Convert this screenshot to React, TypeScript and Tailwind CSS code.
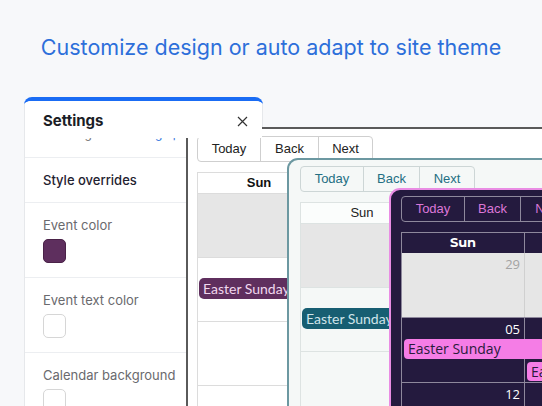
import React from "react";

type Theme = {
  frame: string;
  btnGroup: string;
  btn: string;
  btnSep: string;
  table: string;
  head: string;
  headCell: string;
  row: string;
  cell: string;
  offCell: string;
  dateOn: string;
  dateOff: string;
  event: string;
  event2: string;
  widths: [string, string, string];
};

const weeks: { off: boolean[]; dates: string[] }[] = [
  { off: [true, true, true], dates: ["29", "30", "31"] },
  { off: [false, false, false], dates: ["05", "06", "07"] },
  { off: [false, false, false], dates: ["12", "13", "14"] },
  { off: [false, false, false], dates: ["19", "20", "21"] },
];

function Calendar({ t }: { t: Theme }) {
  return (
    <div className={t.frame}>
      <div className={t.btnGroup}>
        <div className={`${t.widths[0]} ${t.btn}`}>Today</div>
        <div className={`${t.widths[1]} ${t.btn} ${t.btnSep}`}>Back</div>
        <div className={`${t.widths[2]} ${t.btn} ${t.btnSep}`}>Next</div>
      </div>
      <div className={t.table}>
        <div className={t.head}>
          <div className={t.headCell}>Sun</div>
          <div className={t.headCell}>Mon</div>
          <div className={t.headCell}>Tue</div>
        </div>
        {weeks.map((w, i) => (
          <div key={i} className={t.row}>
            <div className="absolute inset-0 grid grid-cols-[123px_123px_123px]">
              {w.off.map((o, j) => (
                <div key={j} className={o ? t.offCell : t.cell} />
              ))}
            </div>
            <div className="relative grid grid-cols-[123px_123px_123px]">
              {w.dates.map((d, j) => (
                <div key={j} className={`${w.off[j] ? t.dateOff : t.dateOn}`}>
                  {d}
                </div>
              ))}
            </div>
            {i === 1 && (
              <div className="relative flex flex-col">
                <div className={t.event}>Easter Sunday</div>
                <div className={t.event2}>Easter Monday</div>
              </div>
            )}
          </div>
        ))}
      </div>
    </div>
  );
}

const cal1: Theme = {
  frame:
    "absolute left-[186px] top-[127px] w-[420px] h-[300px] rounded-tl-[11px] border-2 border-[#5a5a5a] bg-white pl-[9px] pt-[7px]",
  btnGroup:
    "flex h-[26px] w-fit rounded-[4px] border border-[#cfcfcf] text-[13px] text-[#222] [font-family:'Liberation_Sans',Arial,sans-serif]",
  btn: "flex items-center justify-center",
  btnSep: "border-l border-[#cfcfcf]",
  widths: ["w-[62px]", "w-[58px]", "w-[54px]"],
  table: "mt-[10px] border-l border-t border-[#dcdcdc]",
  head: "grid grid-cols-[123px_123px_123px] h-[21px] bg-white",
  headCell:
    "flex items-center justify-center border-r border-b border-[#dcdcdc] text-[13px] font-bold text-[#111] [font-family:'Liberation_Sans',Arial,sans-serif]",
  row: "relative h-[64px] border-b border-[#dcdcdc]",
  cell: "border-r border-[#dcdcdc] bg-white",
  offCell: "border-r border-[#dcdcdc] bg-[#e6e6e6]",
  dateOn: "h-[20px] pr-[6px] text-right text-[12px] leading-[20px] text-[#333]",
  dateOff: "h-[20px] pr-[6px] text-right text-[12px] leading-[20px] text-[#999]",
  event:
    "ml-[1px] w-[244px] h-[21px] rounded-[5px] bg-[#5f2f5e] px-[4px] text-[14px] leading-[21px] text-[#f1d8ef] [font-family:Lato,sans-serif]",
  event2:
    "ml-[125px] mt-[2px] w-[120px] h-[20px] rounded-[5px] bg-[#5f2f5e] px-[4px] text-[14px] leading-[20px] text-[#f1d8ef] [font-family:Lato,sans-serif]",
};

const cal2: Theme = {
  frame:
    "absolute left-[287px] top-[158px] w-[380px] h-[270px] rounded-tl-[11px] border-2 border-[#6c98a1] bg-[#f5f8f7] pl-[11px] pt-[6px]",
  btnGroup:
    "flex h-[26px] w-fit rounded-[4px] border border-[#cdd6d6] text-[13px] text-[#236f83] [font-family:'Liberation_Sans',Arial,sans-serif]",
  btn: "flex items-center justify-center",
  btnSep: "border-l border-[#cdd6d6]",
  widths: ["w-[62px]", "w-[56px]", "w-[55px]"],
  table: "mt-[10px] border-l border-t border-[#dde3e2]",
  head: "grid grid-cols-[123px_123px_123px] h-[21px] bg-[#fbfdfc]",
  headCell:
    "flex items-center justify-center border-r border-b border-[#dde3e2] text-[13px] text-[#222] [font-family:'Liberation_Sans',Arial,sans-serif]",
  row: "relative h-[64px] border-b border-[#dde3e2]",
  cell: "border-r border-[#dde3e2] bg-[#f5f8f7]",
  offCell: "border-r border-[#dde3e2] bg-[#e6e6e6]",
  dateOn: "h-[20px] pr-[6px] text-right text-[12px] leading-[20px] text-[#333]",
  dateOff: "h-[20px] pr-[6px] text-right text-[12px] leading-[20px] text-[#999]",
  event:
    "ml-[1px] w-[244px] h-[21px] rounded-[5px] bg-[#175e72] px-[4px] text-[14px] leading-[21px] text-[#cfe4ea] [font-family:Lato,sans-serif]",
  event2:
    "ml-[125px] mt-[2px] w-[120px] h-[20px] rounded-[5px] bg-[#175e72] px-[4px] text-[14px] leading-[20px] text-[#cfe4ea] [font-family:Lato,sans-serif]",
};

const cal3: Theme = {
  frame:
    "absolute left-[389px] top-[188px] w-[300px] h-[240px] rounded-tl-[11px] border-2 border-[#e98de4] bg-[#241a3e] pl-[10px] pt-[6px]",
  btnGroup:
    "flex h-[26px] w-fit rounded-[4px] border border-[#8e889c] text-[13px] text-[#dc77d8] [font-family:'Liberation_Sans',Arial,sans-serif]",
  btn: "flex items-center justify-center",
  btnSep: "border-l border-[#8e889c]",
  widths: ["w-[62px]", "w-[56px]", "w-[56px]"],
  table: "mt-[10px] border-l border-t border-[#8e889c]",
  head: "grid grid-cols-[123px_123px_123px] h-[20px] bg-[#241a3e]",
  headCell:
    "flex items-center justify-center border-r border-[#8e889c] text-[13px] font-bold text-white [font-family:Montserrat,'Open_Sans',sans-serif]",
  row: "relative h-[65px] border-b border-[#8e889c]",
  cell: "border-r border-[#8e889c] bg-[#241a3e]",
  offCell: "border-r border-[#d0d0d0] bg-[#e6e6e6]",
  dateOn:
    "h-[21px] pt-[2px] pr-[5px] text-right text-[13px] leading-[19px] text-white [font-family:'Open_Sans',sans-serif]",
  dateOff:
    "h-[21px] pt-[2px] pr-[5px] text-right text-[13px] leading-[19px] text-[#a3a3a3] [font-family:'Open_Sans',sans-serif]",
  event:
    "ml-[2px] w-[244px] h-[20px] rounded-[4px] bg-[#f57de6] px-[4px] text-[14px] leading-[20px] text-[#2a1b3c] [font-family:'Open_Sans',sans-serif]",
  event2:
    "ml-[125px] mt-[3px] w-[120px] h-[19px] rounded-[4px] bg-[#f57de6] px-[4px] text-[14px] leading-[19px] text-[#2a1b3c] [font-family:'Open_Sans',sans-serif]",
};

function Swatch({ filled }: { filled?: boolean }) {
  return filled ? (
    <div className="mt-[5px] h-[24px] w-[23px] rounded-[5px] border border-[#4a2248] bg-[#5e2f5e]" />
  ) : (
    <div className="mt-[5px] h-[24px] w-[23px] rounded-[5px] border border-[#d6d6d6] bg-white" />
  );
}

function SettingsPanel() {
  return (
    <div className="absolute left-[24px] top-[97px] h-[330px] w-[239px] overflow-hidden rounded-t-[8px] border-t-4 border-[#1a6cf4] bg-white [font-family:Inter,'Noto_Sans',sans-serif]">
      <div className="h-full border-x border-[#e6e8eb]">
        <div className="relative z-10 flex h-[37px] items-center justify-between bg-white pl-[18px] pr-[14px] pt-[4px]">
          <span className="text-[15px] font-bold text-[#1b1d26]">Settings</span>
          <svg width="11" height="11" viewBox="0 0 11 11" className="text-[#333]">
            <path d="M1 1L10 10M10 1L1 10" stroke="currentColor" strokeWidth="1.2" />
          </svg>
        </div>
        <div className="h-[20px] overflow-hidden border-b border-[#eceef1]">
          <div className="-mt-[12px] whitespace-nowrap pl-[18px] text-[12px] leading-[16px]">
            <span className="text-[#777]">Showing in live </span>
            <span className="text-[#3b7be0]">design preview mode</span>
          </div>
        </div>
        <div className="flex h-[45px] items-center border-b border-[#eceef1] pl-[18px] pt-[2px] text-[13px] font-medium text-[#1f2230]">
          Style overrides
        </div>
        <div className="h-[75px] border-b border-[#eceef1] pl-[18px] pt-[13px]">
          <div className="text-[13px] leading-[18px] text-[#6a6a6e]">Event color</div>
          <Swatch filled />
        </div>
        <div className="h-[75px] border-b border-[#eceef1] pl-[18px] pt-[13px]">
          <div className="text-[13px] leading-[18px] text-[#6a6a6e]">Event text color</div>
          <Swatch />
        </div>
        <div className="h-[75px] pl-[18px] pt-[13px]">
          <div className="text-[13px] leading-[18px] text-[#6a6a6e]">Calendar background</div>
          <Swatch />
        </div>
      </div>
    </div>
  );
}

export default function App() {
  return (
    <div className="relative h-[406px] w-[542px] overflow-hidden bg-[#f7f8fa]">
      <div className="pt-[33px] text-center text-[21.5px] leading-[28px] text-[#2d6fda] [font-family:Inter,'Noto_Sans',sans-serif]">
        Customize design or auto adapt to site theme
      </div>
      <SettingsPanel />
      <Calendar t={cal1} />
      <Calendar t={cal2} />
      <Calendar t={cal3} />
    </div>
  );
}
